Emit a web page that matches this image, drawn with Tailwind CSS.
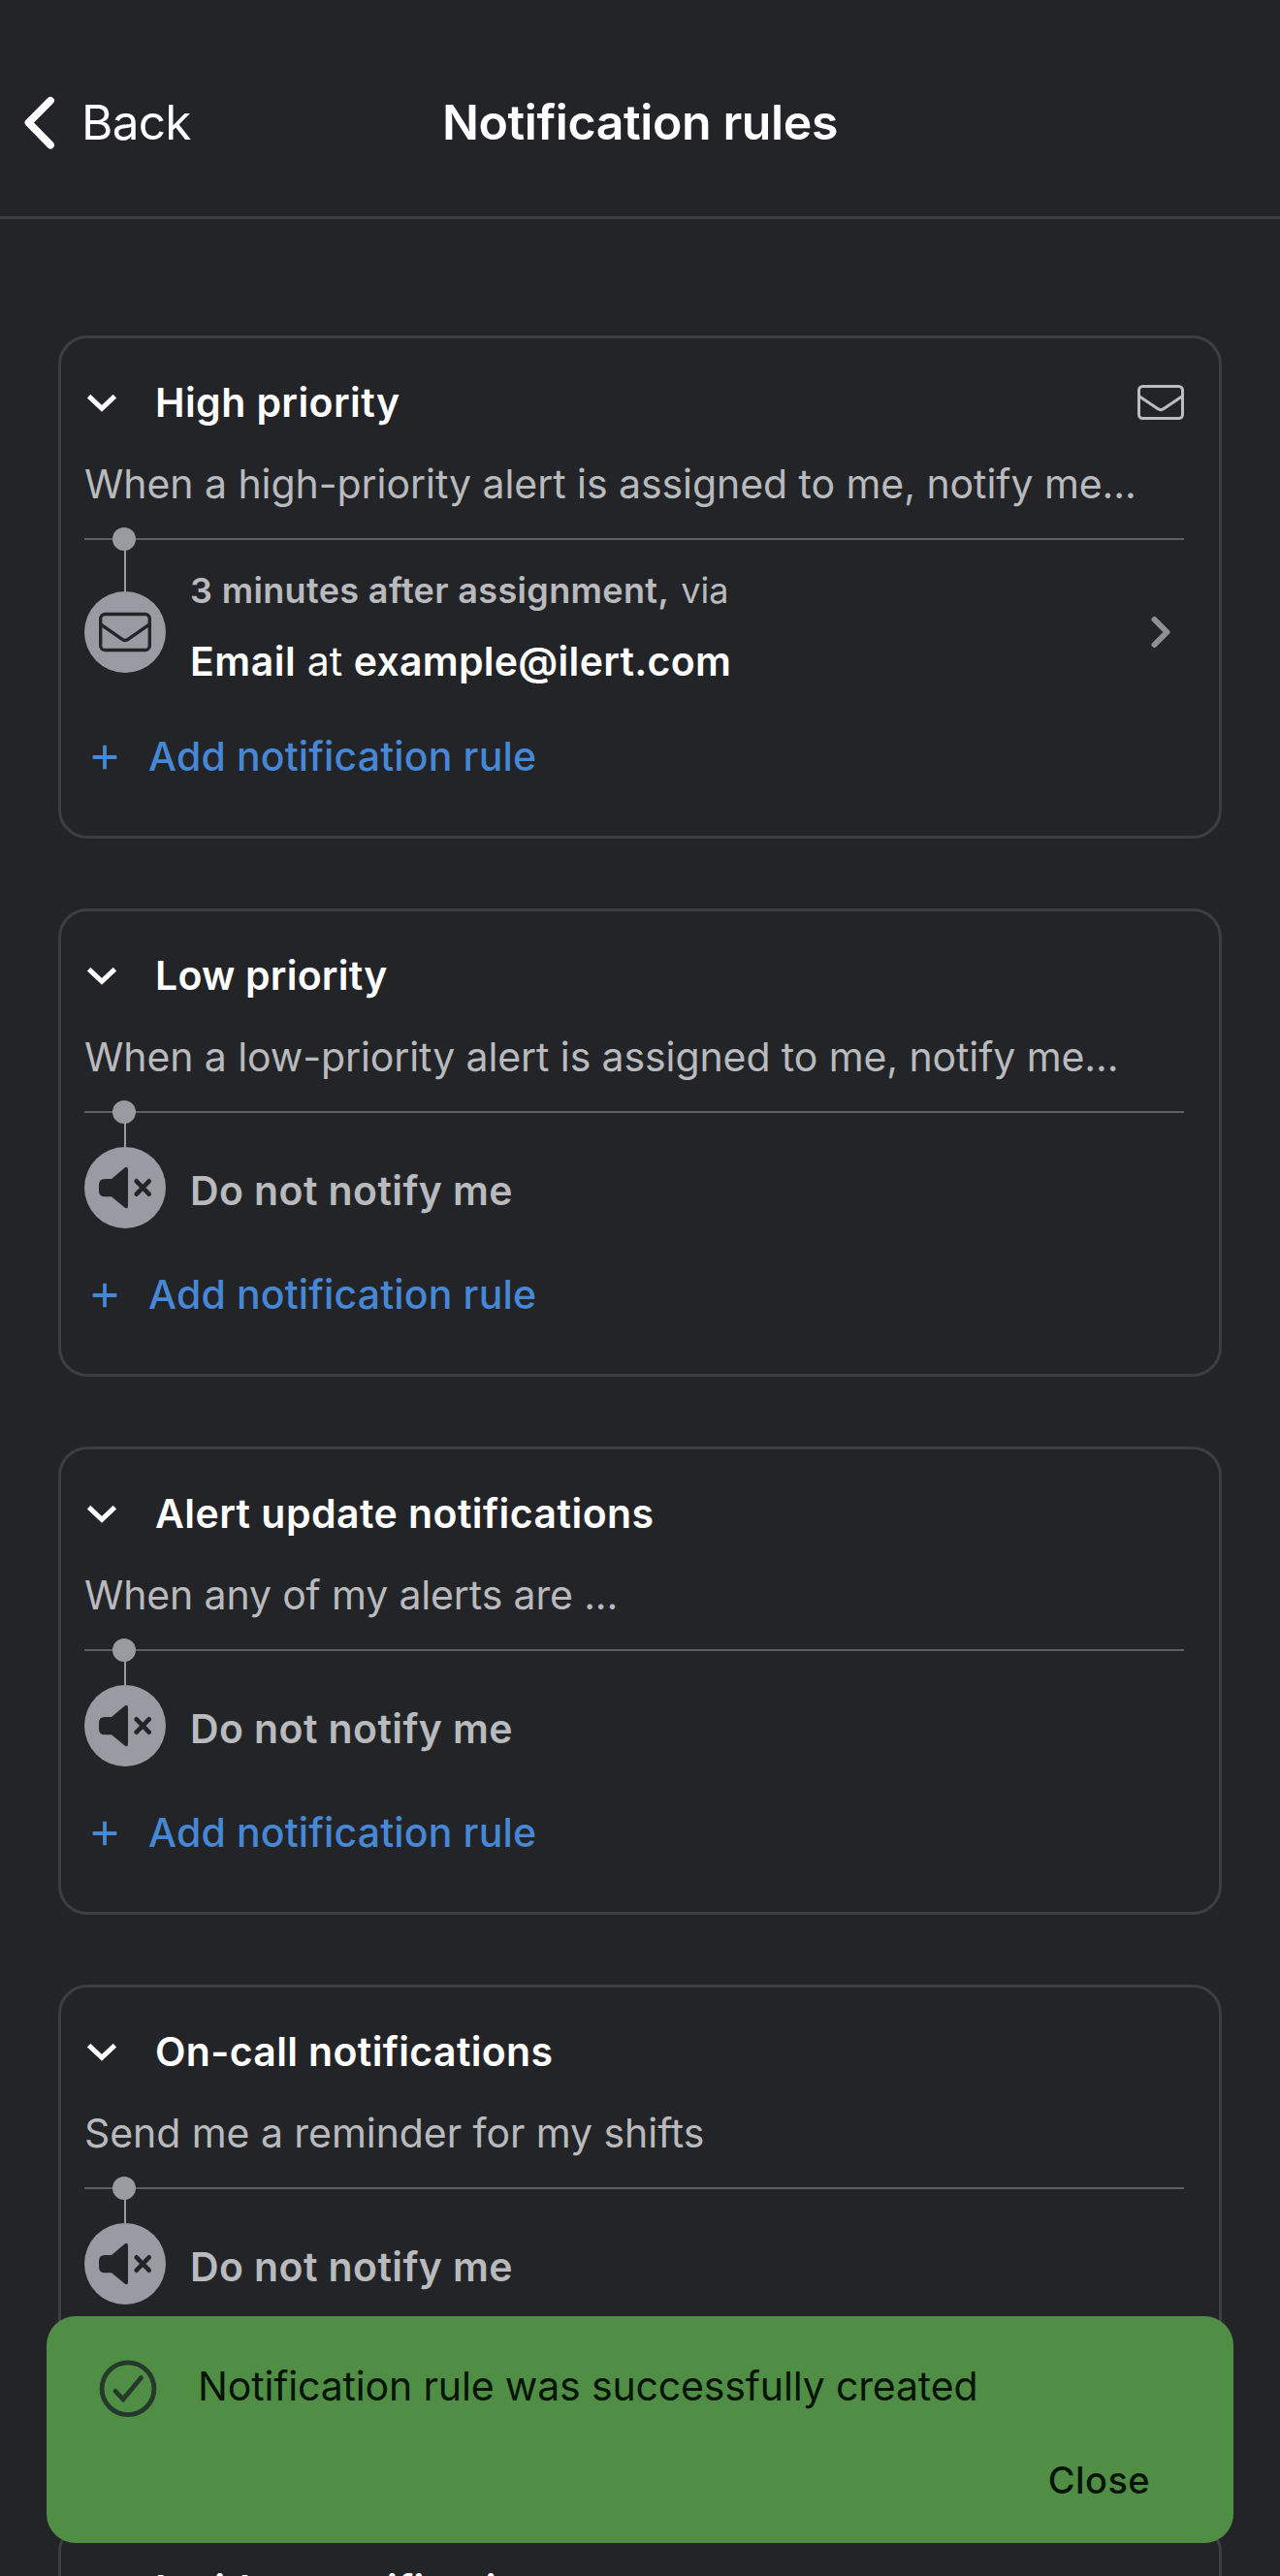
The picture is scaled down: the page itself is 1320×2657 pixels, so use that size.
<!DOCTYPE html>
<html lang="en">
<head>
<meta charset="utf-8">
<title>Notification rules</title>
<script src="https://cdn.jsdelivr.net/npm/@tailwindcss/browser@4"></script>
</head>
<body class="bg-[#232428]">
<svg class="hidden">
  <symbol id="chevron-down" viewBox="0 0 36 60"><path d="M4.6 23.6 18 36.2 31.4 23.6" fill="none" stroke="currentColor" stroke-width="5"/></symbol>
  <symbol id="plus" viewBox="0 0 42 60"><path d="M8.7 31H33.3M21 18.7V43.3" fill="none" stroke="currentColor" stroke-width="3.8"/></symbol>
  <symbol id="mute" viewBox="0 0 84 84">
    <path d="M21 33H28L41.6 21.4Q45 19.4 45 23.4V60.6Q45 64.6 41.6 62.6L28 51.2H21Q15 51.2 15 45.2V39Q15 33 21 33Z" fill="currentColor"/>
    <path d="M53.7 35.3 66.7 48.7M66.7 35.3 53.7 48.7" fill="none" stroke="currentColor" stroke-width="4.6" stroke-linecap="round"/>
  </symbol>
</svg>
<div class="relative h-[2657px] w-[1320px] overflow-hidden bg-[#232428] font-['Inter',sans-serif] text-[41px] leading-[60px] text-white">
  <header class="grid h-[226px] grid-cols-[1fr_auto_1fr] border-b-3 border-[#3d3e42] pt-[93px]">
    <div class="flex h-[66px] items-center">
      <svg class="h-[66px] w-[84px] shrink-0" viewBox="0 0 84 66"><path d="M52 10.8 29.5 33.6 52 56.6" fill="none" stroke="currentColor" stroke-width="7.8" stroke-linecap="round" stroke-linejoin="round"/></svg>
      <span class="text-[49.5px] tracking-[-0.7px]">Back</span>
    </div>
    <h1 class="h-[66px] text-[50px] leading-[66px] font-semibold tracking-[-0.4px]">Notification rules</h1>
  </header>

  <main class="flex flex-col gap-[72px] px-[60px] pt-[120px]">
    <section class="rounded-[30px] border-3 border-[#3d3e42] pt-9 pr-9 pb-[52px] pl-6">
      <div class="flex h-[60px] items-center">
        <svg class="h-[60px] w-9"><use href="#chevron-down"/></svg>
        <h2 class="ml-[37px] font-semibold tracking-[0.4px]">High priority</h2>
        <svg class="ml-auto h-9 w-12 text-[#bcbdc1]" viewBox="0 0 48 36" fill="none" stroke="currentColor" stroke-width="3"><rect x="1.5" y="1.5" width="45" height="33" rx="4"/><path d="M1.5 11.5 20.8 24.6Q24 26.8 27.2 24.6L46.5 11.5"/></svg>
      </div>
      <p class="mt-6 tracking-[-0.06px] whitespace-nowrap text-[#b9babd]">When a high-priority alert is assigned to me, notify me...</p>
      <div class="relative mt-[26px] h-0.5 bg-[#5e5f63]"><span class="absolute -top-[11px] left-[29px] size-6 rounded-full bg-[#9a9aa2]"></span></div>
      <div class="flex h-[193px]">
        <div class="flex w-[84px] flex-col items-center">
          <div class="h-[53px] w-0.5 bg-[#9a9aa2]"></div>
          <div class="size-[84px] rounded-full bg-[#9a9aa2] text-[#232428]">
            <svg class="size-[84px]" viewBox="0 0 84 84" fill="none" stroke="currentColor" stroke-width="3.4"><rect x="16.7" y="23.5" width="50.6" height="37" rx="4.6"/><path d="M16.7 33.8 38.6 49.2Q42 51.6 45.4 49.2L67.3 33.8"/></svg>
          </div>
        </div>
        <div class="ml-[25px] pt-[25px]">
          <p class="text-[36px] leading-[54px] text-[#b9babd]"><span class="font-semibold tracking-[0.35px]">3 minutes after assignment,</span><span class="ml-3">via</span></p>
          <p class="mt-4"><span class="font-semibold tracking-[0.5px]">Email</span> at <span class="font-semibold tracking-[0.28px]">example@ilert.com</span></p>
        </div>
        <svg class="mt-[65px] mr-3 ml-auto h-[60px] w-6 text-[#8f9094]" viewBox="0 0 24 60"><path d="M5.5 17 18.5 30 5.5 43" fill="none" stroke="currentColor" stroke-width="6" stroke-linecap="round" stroke-linejoin="round"/></svg>
      </div>
      <div class="flex h-[60px] items-center text-[#4688d6]">
        <svg class="h-[60px] w-[42px]"><use href="#plus"/></svg>
        <span class="ml-6 font-medium tracking-[0.15px]">Add notification rule</span>
      </div>
    </section>

    <section class="rounded-[30px] border-3 border-[#3d3e42] pt-9 pr-9 pb-[52px] pl-6">
      <div class="flex h-[60px] items-center">
        <svg class="h-[60px] w-9"><use href="#chevron-down"/></svg>
        <h2 class="ml-[37px] font-semibold tracking-[0.2px]">Low priority</h2>
      </div>
      <p class="mt-6 tracking-[-0.1px] whitespace-nowrap text-[#b9babd]">When a low-priority alert is assigned to me, notify me...</p>
      <div class="relative mt-[26px] h-0.5 bg-[#5e5f63]"><span class="absolute -top-[11px] left-[29px] size-6 rounded-full bg-[#9a9aa2]"></span></div>
      <div class="flex h-[157px]">
        <div class="flex w-[84px] flex-col items-center">
          <div class="h-[35px] w-0.5 bg-[#9a9aa2]"></div>
          <div class="size-[84px] rounded-full bg-[#9a9aa2] text-[#232428]"><svg class="size-[84px]"><use href="#mute"/></svg></div>
        </div>
        <p class="ml-[25px] pt-[50px] font-semibold tracking-[0.4px] text-[#b9babd]">Do not notify me</p>
      </div>
      <div class="flex h-[60px] items-center text-[#4688d6]">
        <svg class="h-[60px] w-[42px]"><use href="#plus"/></svg>
        <span class="ml-6 font-medium tracking-[0.15px]">Add notification rule</span>
      </div>
    </section>

    <section class="rounded-[30px] border-3 border-[#3d3e42] pt-9 pr-9 pb-[52px] pl-6">
      <div class="flex h-[60px] items-center">
        <svg class="h-[60px] w-9"><use href="#chevron-down"/></svg>
        <h2 class="ml-[37px] font-semibold tracking-[0.45px]">Alert update notifications</h2>
      </div>
      <p class="mt-6 tracking-[-0.15px] whitespace-nowrap text-[#b9babd]">When any of my alerts are ...</p>
      <div class="relative mt-[26px] h-0.5 bg-[#5e5f63]"><span class="absolute -top-[11px] left-[29px] size-6 rounded-full bg-[#9a9aa2]"></span></div>
      <div class="flex h-[157px]">
        <div class="flex w-[84px] flex-col items-center">
          <div class="h-[35px] w-0.5 bg-[#9a9aa2]"></div>
          <div class="size-[84px] rounded-full bg-[#9a9aa2] text-[#232428]"><svg class="size-[84px]"><use href="#mute"/></svg></div>
        </div>
        <p class="ml-[25px] pt-[50px] font-semibold tracking-[0.4px] text-[#b9babd]">Do not notify me</p>
      </div>
      <div class="flex h-[60px] items-center text-[#4688d6]">
        <svg class="h-[60px] w-[42px]"><use href="#plus"/></svg>
        <span class="ml-6 font-medium tracking-[0.15px]">Add notification rule</span>
      </div>
    </section>

    <section class="rounded-[30px] border-3 border-[#3d3e42] pt-9 pr-9 pb-[52px] pl-6">
      <div class="flex h-[60px] items-center">
        <svg class="h-[60px] w-9"><use href="#chevron-down"/></svg>
        <h2 class="ml-[37px] font-semibold tracking-[0.35px]">On-call notifications</h2>
      </div>
      <p class="mt-6 tracking-[-0.06px] whitespace-nowrap text-[#b9babd]">Send me a reminder for my shifts</p>
      <div class="relative mt-[26px] h-0.5 bg-[#5e5f63]"><span class="absolute -top-[11px] left-[29px] size-6 rounded-full bg-[#9a9aa2]"></span></div>
      <div class="flex h-[157px]">
        <div class="flex w-[84px] flex-col items-center">
          <div class="h-[35px] w-0.5 bg-[#9a9aa2]"></div>
          <div class="size-[84px] rounded-full bg-[#9a9aa2] text-[#232428]"><svg class="size-[84px]"><use href="#mute"/></svg></div>
        </div>
        <p class="ml-[25px] pt-[50px] font-semibold tracking-[0.4px] text-[#b9babd]">Do not notify me</p>
      </div>
      <div class="h-[60px]"></div>
    </section>

    <section class="rounded-t-[30px] border-3 border-b-0 border-[#3d3e42] pt-9 pr-9 pl-6">
      <div class="flex h-[60px] items-center">
        <svg class="h-[60px] w-9"><use href="#chevron-down"/></svg>
        <h2 class="ml-[37px] font-semibold tracking-[0.3px]">Incident notifications</h2>
      </div>
    </section>
  </main>

  <div class="absolute inset-x-12 top-[2389px] flex h-[234px] flex-col rounded-[30px] bg-[#508e46] pt-[42px] text-[#051405]" role="status">
    <div class="flex h-[60px]">
      <svg class="mt-[3px] ml-[54px] size-[60px] text-[#24392b]" viewBox="0 0 60 60" fill="none" stroke="currentColor"><circle cx="30" cy="29.8" r="26.9" stroke-width="4.8"/><path d="M17 32.3 25 40.6 43.5 18.5" stroke-width="4.8" stroke-linecap="round" stroke-linejoin="miter"/></svg>
      <p class="ml-[42px] tracking-[-0.15px] whitespace-nowrap">Notification rule was successfully created</p>
    </div>
    <div class="mt-[39px] mr-[86px] self-end text-[38px] leading-[56px] font-medium tracking-[0.4px]">Close</div>
  </div>
</div>
</body>
</html>
